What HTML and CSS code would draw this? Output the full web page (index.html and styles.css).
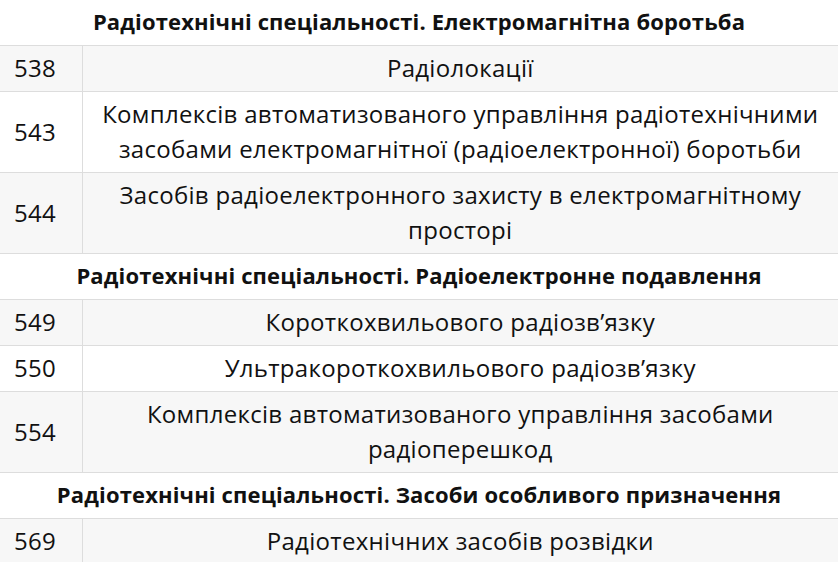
FILE: index.html
```html
<!DOCTYPE html>
<html lang="uk">
<head>
<meta charset="utf-8">
<link rel="stylesheet" href="styles.css">
</head>
<body>
<table class="spec">
  <colgroup><col class="col-code"><col class="col-name"></colgroup>
  <tbody>
    <tr class="group"><th colspan="2">Радіотехнічні спеціальності. Електромагнітна боротьба</th></tr>
    <tr><td class="code">538</td><td class="name">Радіолокації</td></tr>
    <tr><td class="code">543</td><td class="name">Комплексів автоматизованого управління радіотехнічними<br>засобами електромагнітної (радіоелектронної) боротьби</td></tr>
    <tr><td class="code">544</td><td class="name">Засобів радіоелектронного захисту в електромагнітному<br>просторі</td></tr>
    <tr class="group"><th colspan="2">Радіотехнічні спеціальності. Радіоелектронне подавлення</th></tr>
    <tr><td class="code">549</td><td class="name">Короткохвильового радіозв’язку</td></tr>
    <tr><td class="code">550</td><td class="name">Ультракороткохвильового радіозв’язку</td></tr>
    <tr><td class="code">554</td><td class="name">Комплексів автоматизованого управління засобами<br>радіоперешкод</td></tr>
    <tr class="group"><th colspan="2">Радіотехнічні спеціальності. Засоби особливого призначення</th></tr>
    <tr><td class="code">569</td><td class="name">Радіотехнічних засобів розвідки</td></tr>
  </tbody>
</table>
</body>
</html>
```
FILE: styles.css
```css
html, body {
  margin: 0;
  padding: 0;
  background: #fff;
}
body {
  font-family: "Open Sans", "Noto Sans", sans-serif;
  color: #111111;
}
.spec {
  width: 838px;
  border-collapse: collapse;
  table-layout: fixed;
}
.col-code {
  width: 82px;
}
.spec td, .spec th {
  border-bottom: 1px solid #dddddd;
  padding: 4px 14px 6px;
  line-height: 35px;
  vertical-align: middle;
  white-space: nowrap;
}
.spec td {
  font-size: 24px;
  letter-spacing: 0.3px;
}
.spec tr:nth-child(even) td {
  background: #f7f7f7;
}
.group th {
  font-size: 22px;
  font-weight: 700;
  letter-spacing: 0.15px;
  text-align: center;
  background: #fff;
}
.code {
  text-align: left;
  border-right: 1px solid #dddddd;
}
.name {
  text-align: center;
  padding-left: 4px;
  padding-right: 4px;
}
```
